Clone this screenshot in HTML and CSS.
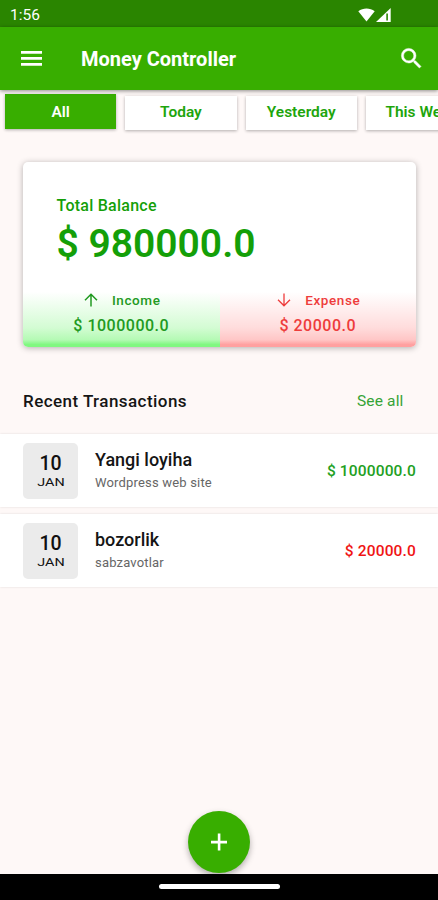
FILE: index.html
```html
<!DOCTYPE html>
<html lang="en">
<head>
    <meta charset="UTF-8">
    <title>Money Controller</title>
    <link rel="stylesheet" href="styles.css">
</head>
<body>
    <div class="status-bar">
        <span class="clock">1:56</span>
        <svg class="status-icons" width="34" height="16" viewBox="0 0 34 16">
            <path d="M0.3 4.2C5 0.6 12 0.6 16.7 4.2L8.5 14.5Z" fill="#fff"/>
            <path d="M18 15L32.7 1V15Z" fill="#fff"/>
            <path d="M28.3 6.5h1.6V13.5h-1.6z" fill="#2a8500"/>
        </svg>
    </div>

    <header class="app-bar">
        <svg class="menu-icon" width="21" height="15" viewBox="0 0 21 15">
            <path d="M0 0h21v2.8H0zM0 6h21v2.8H0zM0 12h21v2.8H0z" fill="#fff"/>
        </svg>
        <h1 class="title">Money Controller</h1>
        <svg class="search-icon" width="27" height="27" viewBox="0 0 24 24">
            <path d="M15.5 14h-.79l-.28-.27A6.47 6.47 0 0 0 16 9.5 6.5 6.5 0 1 0 9.5 16c1.61 0 3.09-.59 4.23-1.57l.27.28v.79l5 4.99L20.49 19l-4.99-5zm-6 0C7.01 14 5 11.99 5 9.5S7.01 5 9.5 5 14 7.01 14 9.5 11.99 14 9.5 14z" fill="#fff" stroke="#fff" stroke-width="0.4"/>
        </svg>
    </header>

    <nav class="tabs">
        <a class="tab active">All</a>
        <a class="tab">Today</a>
        <a class="tab">Yesterday</a>
        <a class="tab">This Week</a>
    </nav>

    <main class="content">
        <section class="balance-card">
            <div class="balance">
                <p class="balance-label">Total Balance</p>
                <p class="balance-value">$ 980000.0</p>
            </div>
            <div class="summary">
                <div class="summary-item income">
                    <div class="summary-label">
                        <svg width="14" height="14" viewBox="0 0 14 14" fill="none" stroke="currentColor" stroke-width="1.5">
                            <path d="M7 13.5V1.5M1 7.2L7 1.2L13 7.2"/>
                        </svg>
                        <span>Income</span>
                    </div>
                    <p class="summary-value">$ 1000000.0</p>
                </div>
                <div class="summary-item expense">
                    <div class="summary-label">
                        <svg width="14" height="14" viewBox="0 0 14 14" fill="none" stroke="currentColor" stroke-width="1.3">
                            <path d="M7 0.5V12.5M1 6.8L7 12.8L13 6.8"/>
                        </svg>
                        <span>Expense</span>
                    </div>
                    <p class="summary-value">$ 20000.0</p>
                </div>
            </div>
        </section>

        <div class="section-header">
            <h2 class="section-title">Recent Transactions</h2>
            <a class="see-all">See all</a>
        </div>

        <div class="transactions">
            <div class="transaction">
                <div class="date">
                    <span class="day">10</span>
                    <span class="month">JAN</span>
                </div>
                <div class="details">
                    <p class="name">Yangi loyiha</p>
                    <p class="note">Wordpress web site</p>
                </div>
                <span class="amount plus">$ 1000000.0</span>
            </div>
            <div class="transaction">
                <div class="date">
                    <span class="day">10</span>
                    <span class="month">JAN</span>
                </div>
                <div class="details">
                    <p class="name">bozorlik</p>
                    <p class="note">sabzavotlar</p>
                </div>
                <span class="amount minus">$ 20000.0</span>
            </div>
        </div>
    </main>

    <div class="fab-row">
        <button class="fab">
            <svg width="16" height="18" viewBox="0 0 16 18">
                <path d="M6.8 0.5h2.6v7.3H16v2.6H9.4v7.1H6.8v-7.1H0V7.8h6.8z" fill="#fff"/>
            </svg>
        </button>
    </div>

    <div class="nav-bar">
        <div class="handle"></div>
    </div>
</body>
</html>
```
FILE: styles.css
```css
* {
    box-sizing: border-box;
}
body {
    margin: 0;
    height: 900px;
    display: flex;
    flex-direction: column;
    overflow: hidden;
    background-color: #fef8f7;
    font-family: Roboto, sans-serif;
    white-space: nowrap;
}
h1, h2, p {
    margin: 0;
}

/* top bars */
.status-bar {
    height: 27px;
    flex: none;
    display: flex;
    align-items: center;
    justify-content: space-between;
    padding: 2px 46px 0 10px;
    background-color: #2a8500;
    color: #fff;
}
.clock {
    font-size: 15.5px;
    line-height: 20px;
}
.app-bar {
    position: relative;
    z-index: 1;
    height: 63px;
    flex: none;
    display: flex;
    align-items: center;
    padding: 0 13px 0 21px;
    background-color: #38ae00;
    box-shadow: 0 1px 4px rgba(0, 0, 0, 0.45);
    color: #fff;
}
.title {
    flex: 1;
    margin-left: 39px;
    font-size: 20px;
    font-weight: bold;
}

/* filter tabs */
.tabs {
    flex: none;
    display: flex;
    gap: 9px;
    height: 47px;
    padding: 4px 0 0 5px;
    overflow: hidden;
}
.tab {
    flex: none;
    width: 111.3px;
    height: 34px;
    margin-top: 2px;
    line-height: 33px;
    text-align: center;
    background-color: #fff;
    color: #1ea50c;
    font-size: 15.5px;
    font-weight: 600;
    box-shadow: 0 1px 3px rgba(0, 0, 0, 0.3);
}
.tab.active {
    height: 35px;
    margin-top: 0;
    line-height: 37px;
    background-color: #38ae00;
    color: #fff;
}

.content {
    flex: 1;
}

/* balance card */
.balance-card {
    height: 185px;
    margin: 25px 22px 0 23px;
    border-radius: 5px;
    background-color: #fff;
    box-shadow: 0 1px 6px rgba(0, 0, 0, 0.3);
    overflow: hidden;
}
.balance {
    height: 125px;
    padding: 34px 34px 0 33.5px;
    color: #149f08;
}
.balance-label {
    font-size: 16px;
    font-weight: 500;
    line-height: 20px;
    letter-spacing: 0.25px;
}
.balance-value {
    font-size: 39px;
    font-weight: 600;
    line-height: 57px;
}
.summary {
    display: flex;
}
.summary-item {
    flex: 1;
    height: 60px;
    padding-top: 4px;
    text-align: center;
}
.income {
    background: linear-gradient(#fff 8%, #d3fcd3 68%, #b4fab4 88%, #80f880 96%);
    color: #229a22;
}
.expense {
    background: linear-gradient(#fff 8%, #ffdcdc 68%, #ffc6c6 88%, #ffa0a0 96%);
    color: #ee3c3c;
}
.summary-label {
    display: flex;
    align-items: center;
    justify-content: center;
    gap: 14px;
    height: 20px;
    margin-top: -1px;
    padding-left: 2px;
    font-size: 13.5px;
    font-weight: 500;
    letter-spacing: 0.6px;
}
.summary-value {
    margin-top: 6px;
    font-size: 16px;
    font-weight: 500;
    line-height: 20px;
    letter-spacing: 0.5px;
}

/* transactions */
.section-header {
    display: flex;
    align-items: center;
    justify-content: space-between;
    height: 87px;
    padding: 20px 34.5px 0 23px;
}
.section-title {
    font-size: 17px;
    font-weight: 500;
    letter-spacing: 0.45px;
    color: #151515;
}
.see-all {
    font-size: 15.5px;
    letter-spacing: 0.15px;
    color: #36a336;
}
.transactions {
    display: flex;
    flex-direction: column;
    gap: 7px;
}
.transaction {
    display: flex;
    align-items: center;
    height: 73px;
    padding: 0 22px 0 23px;
    background-color: #fff;
    box-shadow: 0 0 2px rgba(0, 0, 0, 0.12);
}
.date {
    display: flex;
    flex-direction: column;
    align-items: center;
    width: 55px;
    height: 56px;
    padding-top: 10px;
    border-radius: 5px;
    background-color: #ebebeb;
    color: #111;
}
.day {
    font-size: 19.5px;
    font-weight: 500;
    line-height: 22px;
}
.month {
    font-size: 11.5px;
    line-height: 14px;
    transform: scaleX(1.25);
}
.details {
    flex: 1;
    margin-left: 17px;
    padding-top: 2px;
}
.name {
    font-size: 18px;
    font-weight: 500;
    line-height: 23px;
    color: #151515;
}
.note {
    font-size: 13px;
    line-height: 24px;
    letter-spacing: 0.18px;
    color: #666;
}
.amount {
    font-size: 15.5px;
    font-weight: 500;
    letter-spacing: 0.15px;
}
.plus {
    color: #229f22;
}
.minus {
    color: #f01414;
}

/* bottom */
.fab-row {
    flex: none;
    display: flex;
    justify-content: center;
    height: 63px;
}
.fab {
    display: flex;
    align-items: center;
    justify-content: center;
    width: 62px;
    height: 62px;
    border: none;
    border-radius: 50%;
    background-color: #38ae00;
    box-shadow: 0 3px 6px rgba(0, 0, 0, 0.3);
}
.nav-bar {
    flex: none;
    position: relative;
    display: flex;
    justify-content: center;
    height: 26px;
    padding-top: 10px;
    background-color: #000;
}
.handle {
    width: 121px;
    height: 5px;
    border-radius: 3px;
    background-color: #fff;
}
```
